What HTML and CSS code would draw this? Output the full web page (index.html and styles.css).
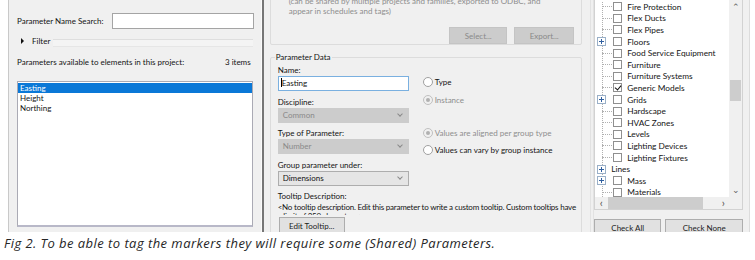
FILE: index.html
```html
<!DOCTYPE html>
<html>
<head>
<meta charset="utf-8">
<link rel="stylesheet" href="styles.css">
</head>
<body>
<div class="shot">
  <section class="left">
    <div class="search-row">
      <span class="lbl">Parameter Name Search:</span>
      <div class="search-input"></div>
    </div>
    <div class="filter-row">
      <span class="tri"></span>
      <span class="lbl">Filter</span>
      <span class="groove"></span>
    </div>
    <div class="avail-row">
      <span>Parameters available to elements in this project:</span>
      <span>3 items</span>
    </div>
    <div class="plist">
      <div class="pitem sel">Easting</div>
      <div class="pitem">Height</div>
      <div class="pitem">Northing</div>
    </div>
  </section>
  <div class="divider"></div>
  <section class="mid">
    <div class="shared-group">
      <div class="shared-text">(can be shared by multiple projects and families, exported to ODBC, and<br>appear in schedules and tags)</div>
      <div class="shared-btns">
        <span class="btn dis w-sel">Select...</span>
        <span class="btn dis w-exp">Export...</span>
      </div>
    </div>
    <div class="data-group">
      <span class="legend">Parameter Data</span>
      <div class="data-cols">
        <div class="fields">
          <div class="flabel">Name:</div>
          <div class="field name-input"><span class="caret"></span>Easting</div>
          <div class="flabel">Discipline:</div>
          <div class="field disabled">Common<span class="chev"></span></div>
          <div class="flabel">Type of Parameter:</div>
          <div class="field disabled">Number<span class="chev"></span></div>
          <div class="flabel">Group parameter under:</div>
          <div class="field combo">Dimensions<span class="chev"></span></div>
        </div>
        <div class="radios">
          <div class="radio r-type"><span class="dot"></span>Type</div>
          <div class="radio r-inst dis"><span class="dot on"></span>Instance</div>
          <div class="radio r-align dis"><span class="dot on"></span>Values are aligned per group type</div>
          <div class="radio r-vary"><span class="dot"></span>Values can vary by group instance</div>
        </div>
      </div>
      <div class="flabel tt-label">Tooltip Description:</div>
      <div class="tt-text">&lt;No tooltip description. Edit this parameter to write a custom tooltip. Custom tooltips have<br>a limit of 250 characters.&gt;</div>
      <span class="btn edit-btn">Edit Tooltip...</span>
    </div>
  </section>
  <div class="sep"></div>
  <section class="right">
    <div class="tree-box">
      <div class="tree-area">
        <div class="tree-rows">
          <div class="trow"><span class="exp none"></span><span class="cb"></span>Fire Protection</div>
          <div class="trow"><span class="exp none"></span><span class="cb"></span>Flex Ducts</div>
          <div class="trow"><span class="exp none"></span><span class="cb"></span>Flex Pipes</div>
          <div class="trow"><span class="exp"></span><span class="cb"></span>Floors</div>
          <div class="trow"><span class="exp none"></span><span class="cb"></span>Food Service Equipment</div>
          <div class="trow"><span class="exp none"></span><span class="cb"></span>Furniture</div>
          <div class="trow"><span class="exp none"></span><span class="cb"></span>Furniture Systems</div>
          <div class="trow"><span class="exp none"></span><span class="cb checked"></span>Generic Models</div>
          <div class="trow"><span class="exp"></span><span class="cb"></span>Grids</div>
          <div class="trow"><span class="exp none"></span><span class="cb"></span>Hardscape</div>
          <div class="trow"><span class="exp none"></span><span class="cb"></span>HVAC Zones</div>
          <div class="trow"><span class="exp none"></span><span class="cb"></span>Levels</div>
          <div class="trow"><span class="exp none"></span><span class="cb"></span>Lighting Devices</div>
          <div class="trow"><span class="exp none"></span><span class="cb"></span>Lighting Fixtures</div>
          <div class="trow lines"><span class="exp"></span>Lines</div>
          <div class="trow"><span class="exp"></span><span class="cb"></span>Mass</div>
          <div class="trow"><span class="exp none"></span><span class="cb"></span>Materials</div>
        </div>
        <div class="vscroll">
          <span class="arrow">&#8963;</span>
          <span class="vtrack"><span class="vthumb"></span></span>
          <span class="arrow">&#8964;</span>
        </div>
      </div>
      <div class="hscroll">
        <span class="harrow">&lsaquo;</span>
        <span class="htrack"><span class="hthumb"></span></span>
        <span class="harrow">&rsaquo;</span>
        <span class="corner"></span>
      </div>
    </div>
    <div class="check-btns">
      <span class="btn w-all">Check All</span>
      <span class="btn w-none">Check None</span>
    </div>
  </section>
</div>
<p class="caption">Fig 2. To be able to tag the markers they will require some (Shared) Parameters.</p>
</body>
</html>
```

FILE: styles.css
```css
* { box-sizing: border-box; }
html, body { margin: 0; padding: 0; background: #fff; }
body {
  font-family: "Lato", "Noto Sans", sans-serif;
  font-size: 8px;
  color: #141414;
  width: 755px;
  height: 260px;
  overflow: hidden;
}
.shot {
  margin-left: 8px;
  width: 742px;
  height: 232px;
  display: flex;
  border-left: 1px solid #c9c9c9;
  border-right: 1px solid #dcdcdc;
  background: #f0f0f0;
  overflow: hidden;
}

/* ---------- left panel ---------- */
.left {
  width: 252px;
  padding: 13px 7px 0 8px;
  display: flex;
  flex-direction: column;
}
.search-row {
  display: flex;
  align-items: center;
  justify-content: space-between;
  height: 16px;
}
.search-input {
  width: 142px;
  height: 16px;
  background: #fff;
  border: 1px solid #a4a4a4;
}
.filter-row {
  display: flex;
  align-items: center;
  height: 10px;
  margin-top: 7px;
  padding-left: 4px;
}
.tri {
  width: 0; height: 0;
  border-left: 3px solid #111;
  border-top: 3px solid transparent;
  border-bottom: 3px solid transparent;
  margin-right: 8px;
}
.filter-row .lbl { margin-right: 3px; }
.groove {
  flex: 1;
  height: 8px;
  margin-top: 4px;
  border-top: 1px solid #dedede;
  border-bottom: 1px solid #e6e6e6;
  background: #f4f4f4;
  margin-right: 1px;
}
.avail-row {
  display: flex;
  justify-content: space-between;
  height: 12px;
  line-height: 12px;
  margin-top: 10px;
  padding-right: 3px;
}
.plist {
  margin-top: 13px;
  width: 236px;
  height: 146px;
  background: #fff;
  border: 1px solid #aaaab4;
  border-bottom: 2px solid #b8b8c8;
  padding: 1px 0 0 0;
}
.pitem {
  height: 10px;
  line-height: 10px;
  padding-left: 2px;
}
.pitem.sel { background: #0a78d7; color: #fff; }

.divider {
  width: 3px;
  border-left: 1px solid #fafafa;
  background: #767676;
}

/* ---------- middle panel ---------- */
.mid {
  width: 327px;
  padding: 0 8px 0 6px;
  display: flex;
  flex-direction: column;
}
.shared-group {
  height: 50px;
  margin-top: -4px;
  border: 1px solid #dcdcdc;
  border-radius: 2px;
  padding: 0 0 0 18px;
}
.shared-text {
  color: #8e8e8e;
  line-height: 9.5px;
}
.shared-btns {
  display: flex;
  justify-content: flex-end;
  gap: 7px;
  margin-top: 11px;
  padding-right: 7px;
}
.btn {
  display: inline-flex;
  align-items: center;
  justify-content: center;
  height: 17px;
  background: #e1e1e1;
  border: 1px solid #adadad;
  color: #1c1c1c;
}
.btn.dis { background: #cccccc; border-color: #c4c4c4; color: #8a8a8a; }
.w-sel { width: 58px; }
.w-exp { width: 60px; }

.data-group {
  position: relative;
  margin-top: 12px;
  height: 200px;
  border: 1px solid #dcdcdc;
  border-radius: 2px;
  padding: 6px 0 0 7px;
}
.legend {
  position: absolute;
  top: -6px;
  left: 4px;
  background: #f0f0f0;
  padding: 0 1px;
  line-height: 11px;
}
.data-cols {
  display: flex;
}
.fields {
  width: 131px;
  display: flex;
  flex-direction: column;
}
.flabel {
  height: 12px;
  line-height: 12px;
}
.field {
  position: relative;
  height: 15px;
  line-height: 13px;
  padding-left: 4px;
  margin-bottom: 4.6px;
  border: 1px solid #c4c4c4;
  background: #fff;
}
.name-input { border-color: #7ab0e0; padding-left: 2px; }
.caret {
  display: inline-block;
  width: 1px;
  height: 9px;
  background: #000;
  vertical-align: -1px;
}
.field.disabled { background: #cccccc; border-color: #cccccc; color: #8a8a8a; }
.field.combo { background: #e5e5e5; border-color: #adadad; }
.chev {
  position: absolute;
  right: 6px;
  top: 3px;
  width: 4px;
  height: 4px;
  border-right: 1px solid #8a8a8a;
  border-bottom: 1px solid #8a8a8a;
  transform: rotate(45deg);
}
.radios {
  margin-left: 14px;
  display: flex;
  flex-direction: column;
  padding-top: 12px;
}
.radio {
  display: flex;
  align-items: center;
  height: 12px;
  white-space: nowrap;
}
.radio.dis { color: #8e8e8e; }
.dot {
  width: 10px;
  height: 10px;
  border-radius: 50%;
  border: 1px solid #a0a0a0;
  background: #fff;
  margin-right: 2px;
  display: inline-flex;
  align-items: center;
  justify-content: center;
}
.radio.dis .dot { border-color: #c0c0c0; background: #f0f0f0; }
.dot.on::after {
  content: "";
  width: 4px;
  height: 4px;
  border-radius: 50%;
  background: #b0b0b0;
}
.r-type { margin-top: 0; }
.r-inst { margin-top: 6px; }
.r-align { margin-top: 21px; }
.r-vary { margin-top: 5px; }

.tt-label { margin-top: 0; }
.tt-text {
  line-height: 8.5px;
  height: 12px;
  overflow: hidden;
  margin-top: 1px;
  white-space: nowrap;
  letter-spacing: -0.22px;
}
.edit-btn {
  width: 66px;
  margin-left: 1px;
  margin-top: 2px;
}

.sep {
  width: 4px;
  border-left: 1px solid #e2e2e2;
  border-right: 1px solid #e2e2e2;
}

/* ---------- right panel ---------- */
.right {
  width: 155px;
  display: flex;
  flex-direction: column;
  font-size: 8.3px;
}
.tree-box {
  width: 149px;
  height: 210px;
  border: 1px solid #d2d2d2;
  border-top: none;
  background: #fff;
  display: flex;
  flex-direction: column;
}
.tree-area {
  flex: 1;
  display: flex;
  overflow: hidden;
}
.tree-rows {
  flex: 1;
  margin-top: 1px;
  padding-left: 2px;
  position: relative;
  overflow: hidden;
}
.tree-rows::before {
  content: "";
  position: absolute;
  left: 7px;
  top: -5px;
  bottom: 0;
  border-left: 1px dotted #b0b0b0;
}
.trow {
  position: relative;
  display: flex;
  align-items: center;
  height: 11.6px;
  white-space: nowrap;
}
.exp {
  position: relative;
  width: 9px;
  height: 9px;
  border: 1px solid #9ab0c8;
  background: #fff;
  margin-right: 7px;
  flex: none;
  z-index: 1;
}
.exp::before {
  content: "";
  position: absolute;
  left: 1px; right: 1px; top: 3px;
  height: 1px;
  background: #3060a0;
}
.exp::after {
  content: "";
  position: absolute;
  top: 1px; bottom: 1px; left: 3px;
  width: 1px;
  background: #3060a0;
}
.exp.none { border-color: transparent; background: transparent; }
.exp.none::before { left: 4px; right: -7px; height: 0; border-top: 1px dotted #b0b0b0; background: none; }
.exp.none::after { display: none; }
.cb {
  width: 9px;
  height: 9px;
  border: 1px solid #8f8f8f;
  background: #fff;
  margin-right: 5px;
  flex: none;
  position: relative;
}
.cb.checked::after {
  content: "";
  position: absolute;
  left: 2px;
  top: 0;
  width: 3px;
  height: 5px;
  border-right: 1.5px solid #111;
  border-bottom: 1.5px solid #111;
  transform: rotate(40deg);
}
.trow.lines .exp { margin-right: 5px; }

.vscroll {
  width: 13px;
  flex: none;
  background: #f0f0f0;
  display: flex;
  flex-direction: column;
  align-items: center;
}
.arrow {
  height: 14px;
  line-height: 14px;
  font-size: 9px;
  color: #606060;
}
.vtrack { flex: 1; width: 100%; position: relative; }
.vthumb {
  position: absolute;
  left: 1px; right: 1px;
  top: 66px;
  height: 21px;
  background: #cdcdcd;
}
.hscroll {
  height: 12px;
  display: flex;
  background: #f0f0f0;
  align-items: center;
}
.harrow {
  width: 12px;
  text-align: center;
  font-size: 11px;
  line-height: 12px;
  color: #505050;
}
.htrack { flex: 1; height: 100%; position: relative; }
.hthumb {
  position: absolute;
  left: 1px;
  width: 95px;
  top: 0; bottom: 0;
  background: #cdcdcd;
}
.corner { width: 13px; height: 100%; background: #f0f0f0; }

.check-btns {
  display: flex;
  gap: 4px;
  margin-top: 9px;
  font-size: 8px;
}
.w-all { width: 67px; }
.w-none { width: 78px; }

.caption {
  margin: 3px 0 0 4px;
  font-family: "Open Sans", "Noto Sans", sans-serif;
  font-style: italic;
  font-size: 13px;
  letter-spacing: 0.45px;
  color: #262626;
  white-space: nowrap;
  line-height: 17px;
}
```
